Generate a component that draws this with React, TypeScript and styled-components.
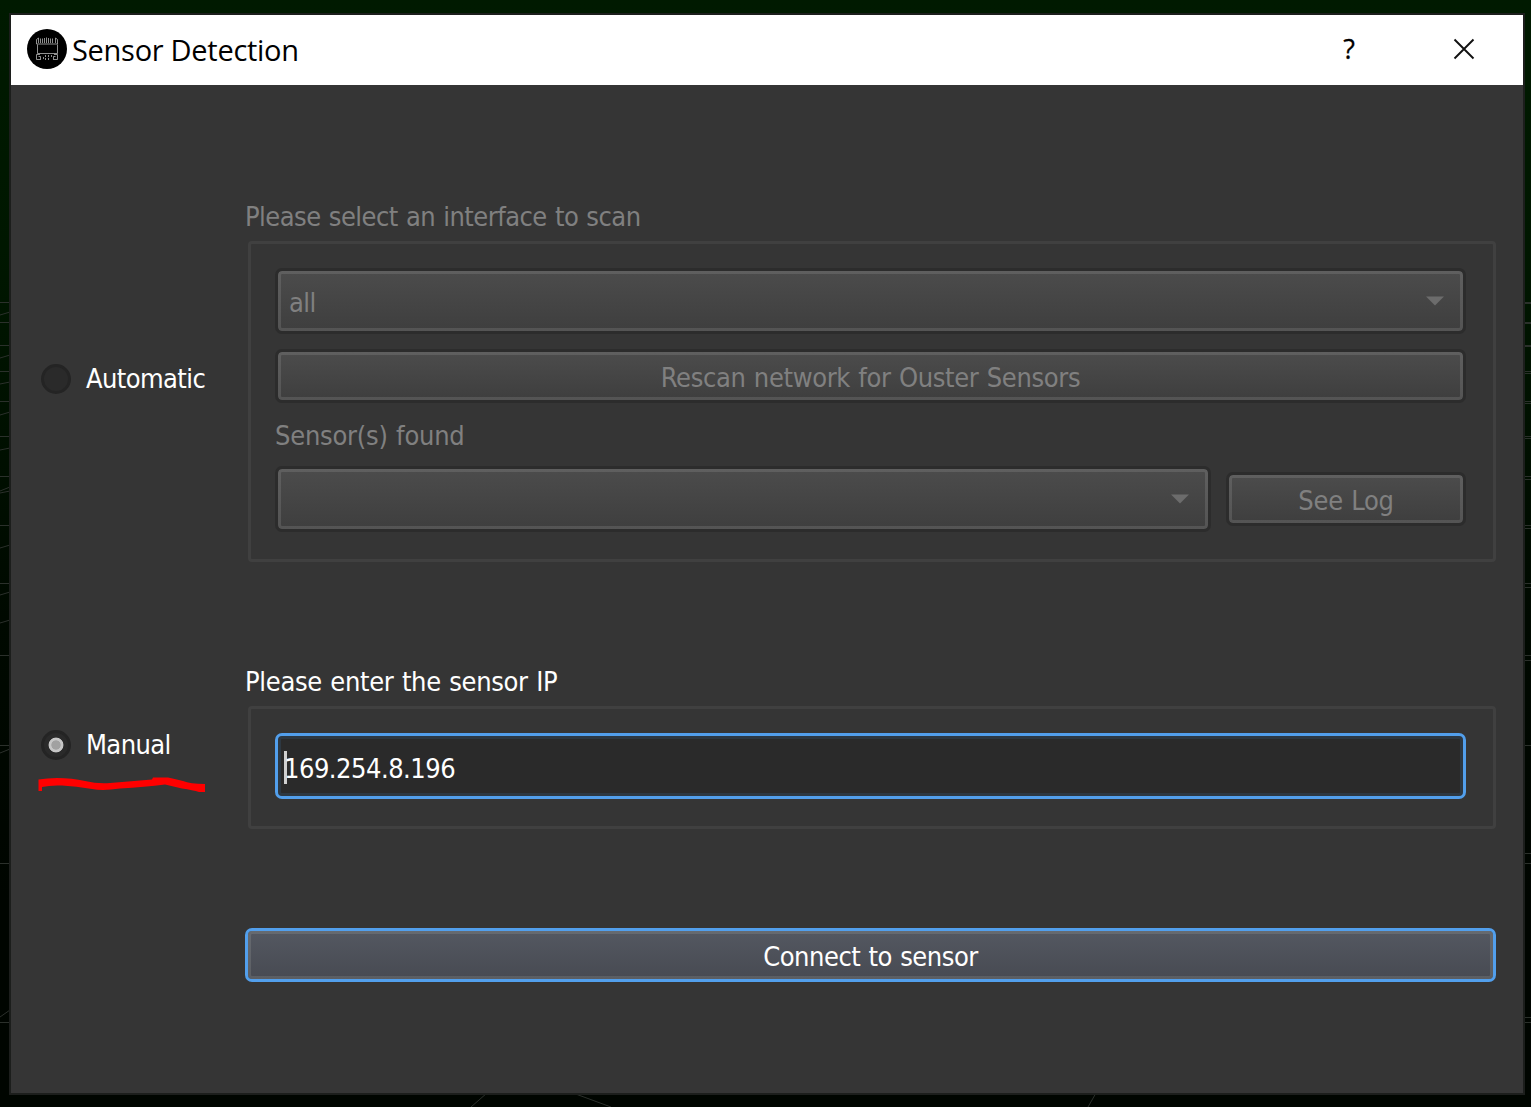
import React, { useState } from "react";
import styled, { createGlobalStyle } from "styled-components";

const GlobalStyle = createGlobalStyle`
  * { box-sizing: border-box; }
  html, body { margin: 0; padding: 0; background: #000500; }
  body { overflow: hidden; }
`;

const Desktop = styled.main`
  position: relative;
  width: 1531px;
  height: 1107px;
  padding: 13px 6px 12px 9px;
  background: linear-gradient(#001a00 0, #001700 250px, #000900 620px, #000500 900px, #000500 100%);
  font-family: "DejaVu Sans Condensed", "DejaVu Sans", sans-serif;
  overflow: hidden;
`;

const GridLines = styled.svg`
  position: absolute;
  inset: 0;
`;

const Dialog = styled.section`
  position: relative;
  display: flex;
  flex-direction: column;
  height: 1082px;
  border: 2px solid #1c1e1c;
  background: #353535;
`;

const TitleBar = styled.header`
  display: flex;
  align-items: center;
  height: 70px;
  padding: 0 48px 0 16px;
  background: #fff;
  color: #000;
`;

const AppIcon = styled.svg`
  flex: none;
  margin-top: -2px;
`;

const Title = styled.h1`
  flex: 1;
  margin: 0 0 0 5px;
  font: 400 29px/40px "Open Sans", sans-serif;
  letter-spacing: -0.29px;
`;

const HelpButton = styled.button`
  border: 0;
  padding: 0;
  width: 20px;
  margin: -3px 94px 0 0;
  background: none;
  color: #000;
  font: 400 27px/40px "Open Sans", sans-serif;
  -webkit-text-stroke: 0.3px #000;
`;

const CloseButton = styled.button`
  display: flex;
  border: 0;
  padding: 0;
  margin-top: -2px;
  background: none;
`;

const Body = styled.form`
  display: grid;
  grid-template-columns: 204px 1251px;
  grid-template-rows: 366px 168px 54px;
  row-gap: 99px;
  padding: 111px 27px 0 30px;
`;

const RadioCell = styled.label<{ $drop: number }>`
  display: flex;
  align-items: center;
  align-self: start;
  height: 30px;
  margin-top: ${(p) => p.$drop}px;
`;

const RadioDot = styled.span<{ $checked: boolean }>`
  flex: none;
  width: 30px;
  height: 30px;
  margin-right: 15px;
  border: 3px solid #242424;
  border-radius: 50%;
  background: ${(p) =>
    p.$checked
      ? "radial-gradient(circle, #a1a1a1 0 4.3px, #c6c6c6 5px 7px, #2a2a2a 7.8px)"
      : "#2a2a2a"};
`;

const Text = styled.span<{ $spacing?: number; $shift?: number; $dim?: boolean }>`
  font-size: 27px;
  line-height: 40px;
  white-space: pre;
  letter-spacing: ${(p) => p.$spacing ?? -0.6}px;
  word-spacing: 1px;
  transform: translateY(${(p) => p.$shift ?? 0}px);
  color: ${(p) => (p.$dim ? "#808080" : "#fff")};
`;

const Group = styled.div`
  display: flex;
  flex-direction: column;
`;

const Frame = styled.div<{ $height: number }>`
  display: flex;
  flex-direction: column;
  height: ${(p) => p.$height}px;
  margin: 5px 0 0 3px;
  padding: 24px 27px 24px 24px;
  border: 3px solid #404040;
  border-radius: 4px;
`;

const Bevel = styled.button<{ $height: number; $primary?: boolean }>`
  display: flex;
  align-items: center;
  justify-content: center;
  flex: none;
  width: 100%;
  height: ${(p) => p.$height}px;
  padding: 3px;
  border: 3px solid ${(p) => (p.$primary ? "#529fec" : "#2c2c2c")};
  border-radius: 7px;
  background:
    linear-gradient(${(p) => (p.$primary ? "#535760, #484b53" : "#4b4b4b, #3f3f3f")}) content-box,
    linear-gradient(${(p) => (p.$primary ? "#666a70, #5b5e63" : "#5f5f5f, #545454")}) padding-box;
  font-family: inherit;
`;

const RescanButton = styled(Bevel)`
  margin-top: 15px;
`;

const Combo = styled(Bevel)`
  justify-content: space-between;
  & > span { margin-left: 8px; }
  & > svg { margin: 0 16px 0 auto; }
`;

const FoundLabel = styled.div`
  display: flex;
  align-items: center;
  height: 63px;
`;

const FoundRow = styled.div`
  display: grid;
  grid-template-columns: 936px 240px;
  align-items: center;
  gap: 15px;
`;

const Field = styled.div`
  display: flex;
  align-items: center;
  height: 66px;
  padding-left: 3px;
  border: 3px solid #529fec;
  border-radius: 7px;
  background: #2a2a2a;
  box-shadow: inset 0 0 0 3px #2d3842;
`;

const Caret = styled.i`
  width: 3px;
  height: 33px;
  margin: 2px -3px 0 3px;
  background: #d0d0d0;
`;

const Underline = styled.svg`
  position: absolute;
  left: 26px;
  top: 758px;
`;

const leftLines = [302, 322, 345, 371, 401, 436, 476, 525, 583, 655, 745, 863, 1022];
const rightLines = [302, 303, 322, 323, 345, 346, 371, 373, 401, 403, 436, 438, 476, 479, 525, 528, 583, 587, 655, 660, 745, 853, 863, 1017, 1022];

function Arrow() {
  return (
    <svg width="18" height="10" viewBox="0 0 18 10">
      <path d="M0 .5H18L9 9.5Z" fill="#6c6c6c" />
    </svg>
  );
}

export default function App() {
  const [mode, setMode] = useState("manual");
  return (
    <Desktop>
      <GlobalStyle />
      <GridLines width="1531" height="1107" stroke="#2b302b" strokeWidth="1" fill="none">
        {leftLines.map((y) => <path key={y} d={`M0 ${y + 0.5}H10`} />)}
        {rightLines.map((y) => <path key={y} d={`M1524 ${y + 0.5}H1531`} />)}
        <path d="M0 315 10 312M0 358 10 355M0 384 10 382M0 415 10 412M0 450 10 448M0 491 10 487M0 493 10 491M0 548 10 545M0 595 10 592M0 623 10 620M0 753 10 749M0 1017 10 1010M471 1107 487 1093M573 1093 611 1107M1088 1107 1096 1093" />
      </GridLines>
      <Dialog>
        <TitleBar>
          <AppIcon width="40" height="40" viewBox="0 0 40 40" fill="none">
            <circle cx="20" cy="20" r="20" fill="#000" />
            <g stroke="#b5b5b5" strokeWidth="0.8">
              <path d="M10.5 15.5V24.5H30.5V15.5" />
              <path d="M9.5 15V10.5L11.5 9V14M13.5 14V9.5M15.5 14V9.5M17.5 14V9M19.5 14V8.5M21.5 14V9M23.5 14V9.5M25.5 14V9.5M28.5 14V9L30.5 10.5V15M9.5 15H30.5" />
              <path d="M13 25.5H9.5V30.5H13M11.5 27.5H13.5V31M27 25.5H30.5V30.5H27M28.5 27.5H26.5V31" />
              <path d="M16.5 28V31M18.5 26V31M21.5 26V31M24.5 26V29" strokeDasharray="2 1" />
            </g>
          </AppIcon>
          <Title>Sensor Detection</Title>
          <HelpButton type="button">?</HelpButton>
          <CloseButton type="button" aria-label="Close">
            <svg width="22" height="22" viewBox="0 0 22 22">
              <path d="M1.5 1.5 20.5 20.5M20.5 1.5 1.5 20.5" stroke="#111" strokeWidth="1.9" />
            </svg>
          </CloseButton>
        </TitleBar>
        <Body onSubmit={(e) => e.preventDefault()}>
          <RadioCell $drop={168} onClick={() => setMode("automatic")}>
            <RadioDot $checked={mode === "automatic"} />
            <Text>Automatic</Text>
          </RadioCell>
          <Group>
            <Text $spacing={-0.54} $shift={1} $dim>Please select an interface to scan</Text>
            <Frame $height={321}>
              <Combo type="button" $height={66}>
                <Text $shift={2} $dim>all</Text>
                <Arrow />
              </Combo>
              <RescanButton type="button" $height={54}>
                <Text $spacing={-0.36} $shift={2} $dim>Rescan network for Ouster Sensors</Text>
              </RescanButton>
              <FoundLabel><Text $spacing={-0.25} $shift={1} $dim>Sensor(s) found</Text></FoundLabel>
              <FoundRow>
                <Combo type="button" $height={66}><Arrow /></Combo>
                <Bevel type="button" $height={54}>
                  <Text $spacing={-0.3} $shift={2} $dim>See Log</Text>
                </Bevel>
              </FoundRow>
            </Frame>
          </Group>
          <RadioCell $drop={69} onClick={() => setMode("manual")}>
            <RadioDot $checked={mode === "manual"} />
            <Text>Manual</Text>
          </RadioCell>
          <Group>
            <Text $spacing={-0.32} $shift={1}>Please enter the sensor IP</Text>
            <Frame $height={123}>
              <Field><Caret /><Text $spacing={-0.5} $shift={3}>169.254.8.196</Text></Field>
            </Frame>
          </Group>
          <span />
          <Bevel type="submit" $height={54} $primary>
            <Text $spacing={-0.48} $shift={2}>Connect to sensor</Text>
          </Bevel>
        </Body>
        <Underline width="172" height="28" viewBox="37 773 172 28">
          <path d="M38.5 779.5Q47 778 57 778Q72 778 85 781Q98 784 110 783L152 779.5L153 777.5H168Q176 779 183 781Q190 784 205 784V792H199Q193 790 182 788.5L165 784.5Q145 787 120 788.5Q103 791 92 789Q76 786 62 785.5Q50 785 42 787V791H38.5Z" fill="#f00" />
        </Underline>
      </Dialog>
    </Desktop>
  );
}
